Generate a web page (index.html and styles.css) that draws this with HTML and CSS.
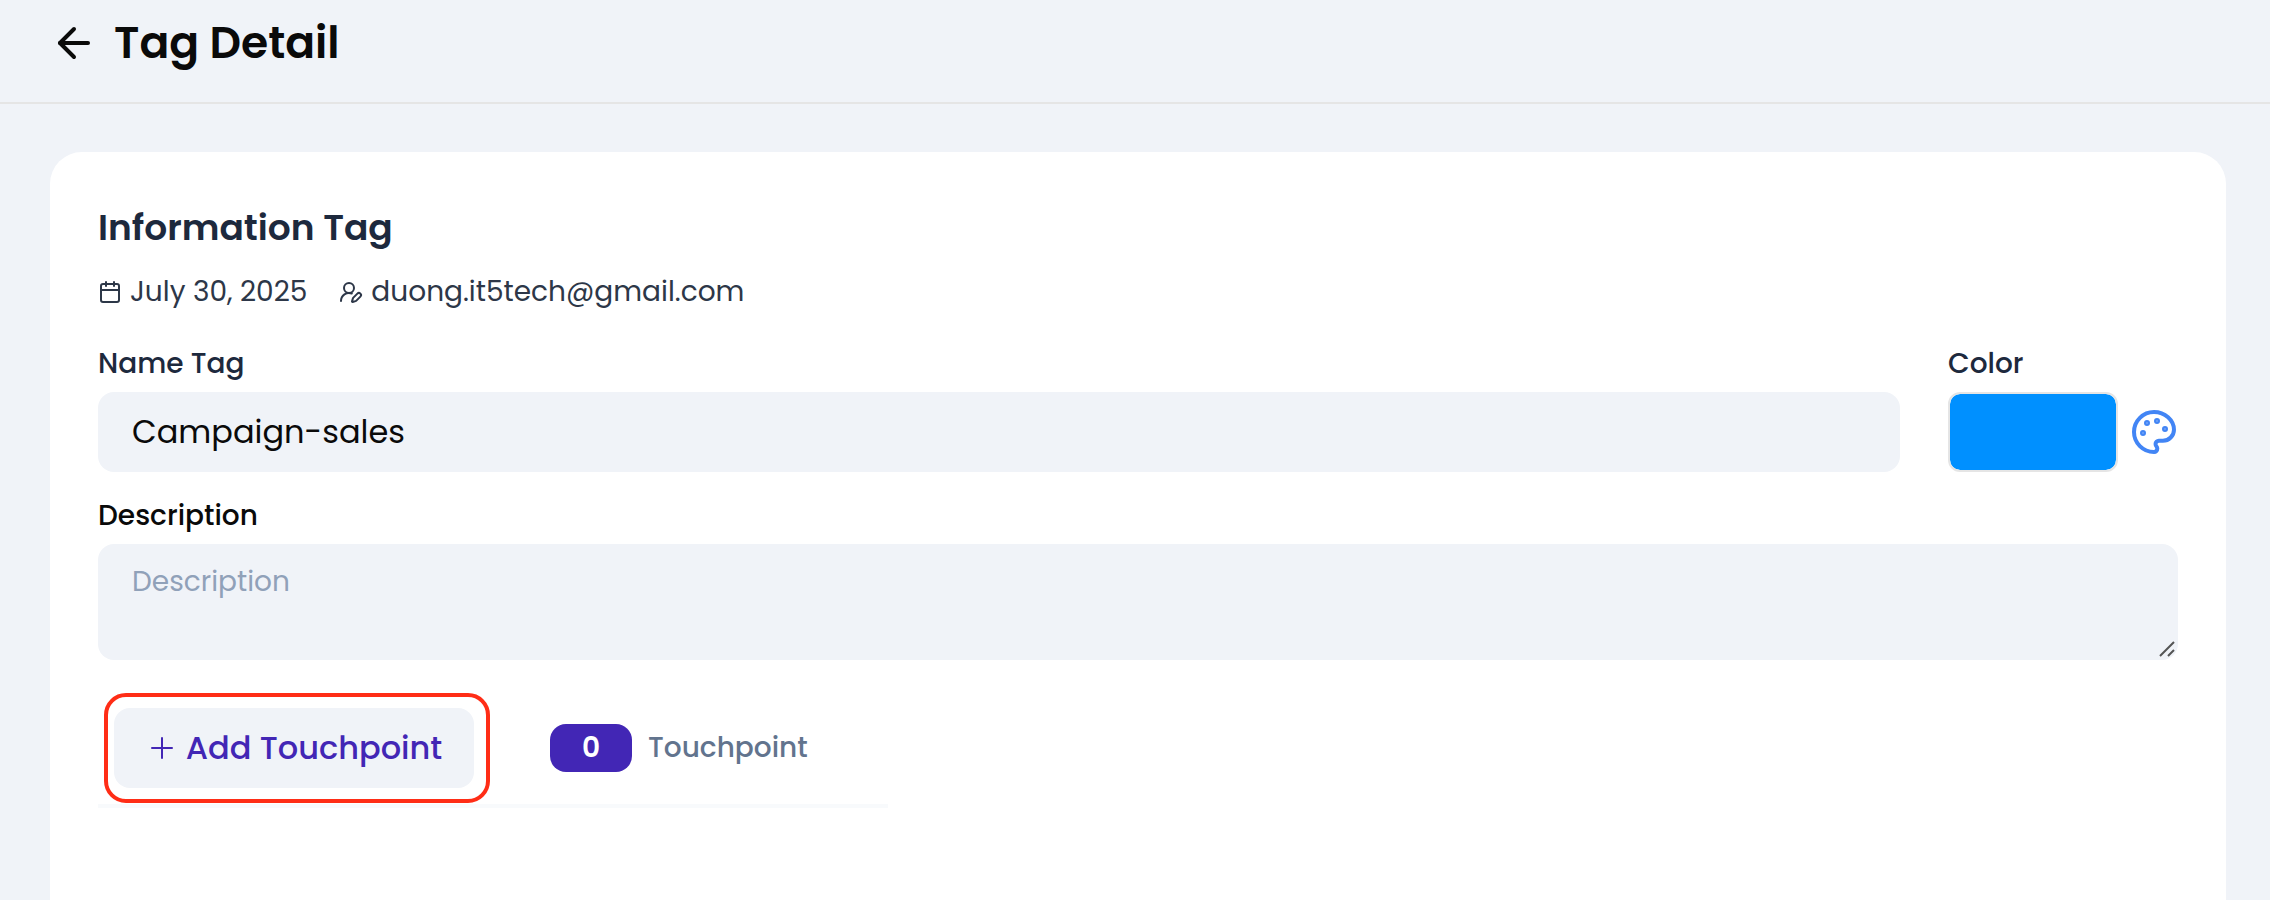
FILE: index.html
```html
<!DOCTYPE html>
<html lang="en">
<head>
<meta charset="utf-8">
<meta name="viewport" content="width=device-width, initial-scale=1">
<title>Tag Detail</title>
<link rel="stylesheet" href="styles.css">
</head>
<body>
<header class="page-header">
  <button class="icon-button" type="button" aria-label="Back">
    <svg class="icon icon-lg" viewBox="0 0 24 24"><path d="m12 19-7-7 7-7"/><path d="M19 12H5"/></svg>
  </button>
  <h1 class="page-title">Tag Detail</h1>
</header>
<main class="card">
  <section class="info">
    <h2 class="section-title">Information Tag</h2>
    <div class="meta">
      <span class="meta-item">
        <svg class="icon icon-sm" viewBox="0 0 24 24"><path d="M8 2v4"/><path d="M16 2v4"/><rect width="18" height="18" x="3" y="4" rx="2"/><path d="M3 10h18"/></svg>
        <span>July 30, 2025</span>
      </span>
      <span class="meta-item">
        <svg class="icon icon-sm" viewBox="0 0 24 24"><path d="M2 21a8 8 0 0 1 10.821-7.487"/><path d="M21.378 16.626a1 1 0 0 0-3.004-3.004l-4.01 4.012a2 2 0 0 0-.506.854l-.837 2.87a.5.5 0 0 0 .62.62l2.87-.837a2 2 0 0 0 .854-.506z"/><circle cx="10" cy="8" r="5"/></svg>
        <span>duong.it5tech@gmail.com</span>
      </span>
    </div>
  </section>
  <form class="form">
    <div class="form-row">
      <div class="field field-grow">
        <label class="label" for="name">Name Tag</label>
        <input class="control" id="name" type="text" value="Campaign-sales">
      </div>
      <div class="field">
        <label class="label" for="color">Color</label>
        <div class="color-row">
          <input class="swatch" id="color" type="color" value="#0090ff">
          <button class="icon-button palette" type="button" aria-label="Choose color">
            <svg class="icon icon-lg" viewBox="0 0 24 24"><circle cx="13.5" cy="6.5" r=".5" fill="currentColor"/><circle cx="17.5" cy="10.5" r=".5" fill="currentColor"/><circle cx="8.5" cy="7.5" r=".5" fill="currentColor"/><circle cx="6.5" cy="12.5" r=".5" fill="currentColor"/><path d="M12 2C6.5 2 2 6.5 2 12s4.5 10 10 10c.926 0 1.648-.746 1.648-1.688 0-.437-.18-.835-.437-1.125-.29-.289-.438-.652-.438-1.125a1.64 1.64 0 0 1 1.668-1.668h1.996c3.051 0 5.555-2.503 5.555-5.554C21.965 6.012 17.461 2 12 2z"/></svg>
          </button>
        </div>
      </div>
    </div>
    <div class="field">
      <label class="label label-dark" for="description">Description</label>
      <div class="area-wrap">
        <textarea class="control control-area" id="description" placeholder="Description"></textarea>
        <svg class="grip" viewBox="0 0 16 16" aria-hidden="true"><path d="M1 15 15 1M9 15l6-6"/></svg>
      </div>
    </div>
  </form>
  <div class="toolbar">
    <div class="highlight">
      <button class="add-button" type="button">
        <svg class="icon icon-md" viewBox="0 0 24 24"><path d="M4.500 12h15"/><path d="M12 4.500v15"/></svg>
        <span>Add Touchpoint</span>
      </button>
    </div>
    <div class="counter">
      <span class="badge">0</span>
      <span>Touchpoint</span>
    </div>
  </div>
</main>
</body>
</html>
```
FILE: styles.css
```css
* {
  box-sizing: border-box;
}

body {
  margin: 0;
  min-height: 100vh;
  display: flex;
  flex-direction: column;
  background: #f0f3f8;
  color: #0a0a0a;
  font-family: Poppins, Inter, sans-serif;
  font-size: 28px;
  line-height: 40px;
}

h1,
h2 {
  margin: 0;
}

button,
input,
textarea {
  font: inherit;
}

.page-header {
  display: flex;
  align-items: center;
  gap: 16px;
  padding: 12px 50px 28px;
  border-bottom: 2px solid #e5e5e5;
}

.page-title {
  font-size: 44px;
  font-weight: 600;
  line-height: 62px;
}

.icon {
  display: block;
  flex: none;
  fill: none;
  stroke: currentColor;
  stroke-width: 2;
  stroke-linecap: round;
  stroke-linejoin: round;
}

.icon-lg {
  width: 48px;
  height: 48px;
}

.icon-md {
  width: 32px;
  height: 32px;
  stroke-width: 1.5;
}

.icon-sm {
  width: 24px;
  height: 24px;
}

.icon-button {
  padding: 0;
  border: 0;
  background: none;
  color: inherit;
}

.card {
  flex: 1;
  margin: 48px 44px 0 50px;
  padding: 48px;
  border-radius: 32px 32px 0 0;
  background: #fff;
}

.section-title {
  color: #1d293d;
  font-size: 36px;
  font-weight: 600;
  line-height: 56px;
}

.meta {
  display: flex;
  gap: 32px;
  margin-top: 16px;
  color: #2d3748;
}

.meta-item {
  display: flex;
  align-items: center;
  gap: 8px;
}

.form {
  display: flex;
  flex-direction: column;
  gap: 24px;
  margin-top: 32px;
}

.form-row {
  display: flex;
  gap: 48px;
}

.field {
  display: flex;
  flex-direction: column;
  gap: 8px;
}

.field-grow {
  flex: 1;
}

.label {
  color: #1d293d;
  font-weight: 500;
}

.label-dark {
  color: #0a0a0a;
}

.control {
  width: 100%;
  height: 80px;
  padding: 18px 34px;
  border: 0;
  border-radius: 16px;
  background: #f0f3f8;
  color: #0a0a0a;
  font-size: 32px;
}

.area-wrap {
  position: relative;
}

.control-area {
  display: block;
  height: 116px;
  font-size: 28px;
  resize: none;
}

.control-area::placeholder {
  color: #90a1b9;
}

.grip {
  position: absolute;
  right: 3px;
  bottom: 3px;
  width: 16px;
  height: 16px;
  fill: none;
  stroke: #555;
  stroke-width: 2;
  pointer-events: none;
}

.color-row {
  display: flex;
  align-items: center;
  gap: 12px;
}

.swatch {
  width: 170px;
  height: 80px;
  padding: 0;
  border: 2px solid #e5e5e5;
  border-radius: 12px;
  background: #fff;
}

.swatch::-webkit-color-swatch-wrapper {
  padding: 0;
}

.swatch::-webkit-color-swatch {
  border: 0;
  border-radius: 10px;
}

.palette {
  color: #4285f5;
}

.toolbar {
  display: flex;
  align-items: center;
  gap: 60px;
  width: 790px;
  max-width: 100%;
  margin-top: 32px;
  padding: 1px 0 1px 6px;
  border-bottom: 4px solid #f8fafc;
}

.highlight {
  padding: 11px 12px 11px 6px;
  border: 4px solid #ff2d16;
  border-radius: 22px;
}

.add-button {
  display: flex;
  align-items: center;
  justify-content: center;
  gap: 8px;
  width: 360px;
  height: 80px;
  border: 0;
  border-radius: 16px;
  background: #f0f3f8;
  color: #4226b5;
  font-size: 32px;
  font-weight: 500;
  white-space: nowrap;
}

.counter {
  display: flex;
  align-items: center;
  gap: 16px;
  color: #62748e;
  font-weight: 500;
}

.badge {
  width: 82px;
  border-radius: 16px;
  background: #4226b5;
  color: #fff;
  font-weight: 600;
  line-height: 48px;
  text-align: center;
}
```
